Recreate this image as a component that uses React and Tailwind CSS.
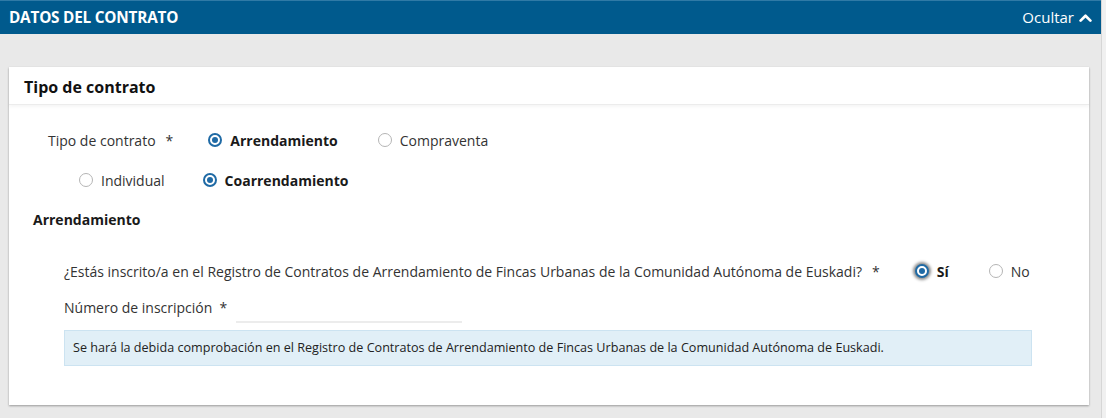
import React from "react";

function Radio({ checked, focus }) {
  if (checked) {
    return (
      <span
        className={
          "inline-flex h-[14px] w-[14px] items-center justify-center rounded-full border-2 border-[#1f6aa5] bg-white " +
          (focus ? "shadow-[0_0_3px_2px_rgba(0,0,0,0.45)]" : "")
        }
      >
        <span className="h-[6px] w-[6px] rounded-full bg-[#1f6aa5]" />
      </span>
    );
  }
  return <span className="inline-block h-[14px] w-[14px] rounded-full border border-[#b5b5b5] bg-white" />;
}

function Option({ checked, focus, label, className = "" }) {
  return (
    <span className={"flex items-center gap-[8px] " + className}>
      <Radio checked={checked} focus={focus} />
      <span className={checked ? "font-bold text-[#1a1a1a]" : "text-[#333]"}>{label}</span>
    </span>
  );
}

export default function App() {
  return (
    <div className="w-[1106px] h-[418px] bg-[#f0f0f0] text-[14px] text-[#333]" style={{ fontFamily: '"Open Sans", "Liberation Sans", sans-serif' }}>
      <div className="w-[1102px] h-[418px] bg-[#e9e9e9] border-r border-[#d6d6d6]">
        <div className="h-[34px] bg-[#005a8d] border-t border-[#2f7aa6] flex items-center justify-between pl-[9px] pr-[9px] text-white">
          <span className="font-bold text-[15.3px] tracking-[-0.2px]">DATOS DEL CONTRATO</span>
          <span className="flex items-center gap-[5px] text-[15px]">
            Ocultar
            <svg width="13" height="10" viewBox="0 0 13 10" className="mt-[1px]">
              <path d="M1.6 7.6 L6.5 2.8 L11.4 7.6" fill="none" stroke="white" strokeWidth="2.7" strokeLinecap="round" strokeLinejoin="round" />
            </svg>
          </span>
        </div>
        <div className="pt-[33px] pl-[9px] pr-[12px]">
          <div className="bg-white w-[1080px] h-[338px] shadow-[0_1px_2px_rgba(0,0,0,0.35)]">
            <div className="h-[38px] flex items-center pl-[15px] pt-[2px] border-b border-[#ececec] shadow-[0_2px_3px_rgba(0,0,0,0.04)]">
              <span className="font-bold text-[16px] text-[#111]">Tipo de contrato</span>
            </div>
            <div className="pt-[24px]">
              <div className="flex items-center h-[22px] pl-[39px]">
                <span className="text-[#333]">Tipo de contrato</span>
                <span className="ml-[10px] text-[#333]">*</span>
                <Option checked label="Arrendamiento" className="ml-[35px]" />
                <Option label="Compraventa" className="ml-[40px]" />
              </div>
              <div className="flex items-center h-[22px] mt-[18px] pl-[70px]">
                <Option label="Individual" />
                <Option checked label="Coarrendamiento" className="ml-[38px]" />
              </div>
              <div className="mt-[17px] pl-[24px] h-[22px] flex items-center font-bold text-[#1a1a1a]">Arrendamiento</div>
              <div className="mt-[30px] pl-[55px] h-[22px] flex items-center">
                <span>¿Estás inscrito/a en el Registro de Contratos de Arrendamiento de Fincas Urbanas de la Comunidad Autónoma de Euskadi?</span>
                <span className="ml-[10px]">*</span>
                <Option checked focus label="Sí" className="ml-[35px]" />
                <Option label="No" className="ml-[40px]" />
              </div>
              <div className="mt-[14px] pl-[55px] h-[22px] flex items-center">
                <span>Número de inscripción</span>
                <span className="ml-[7px]">*</span>
                <span className="ml-[9px] mt-[30px] w-[226px] h-[2px] bg-[#ececec]" />
              </div>
              <div className="mt-[12px] ml-[55px] w-[968px] h-[36px] bg-[#e1eff7] border border-[#cce3f1] flex items-center pl-[8px] text-[12.6px] text-[#222]">
                Se hará la debida comprobación en el Registro de Contratos de Arrendamiento de Fincas Urbanas de la Comunidad Autónoma de Euskadi.
              </div>
            </div>
          </div>
        </div>
      </div>
    </div>
  );
}
